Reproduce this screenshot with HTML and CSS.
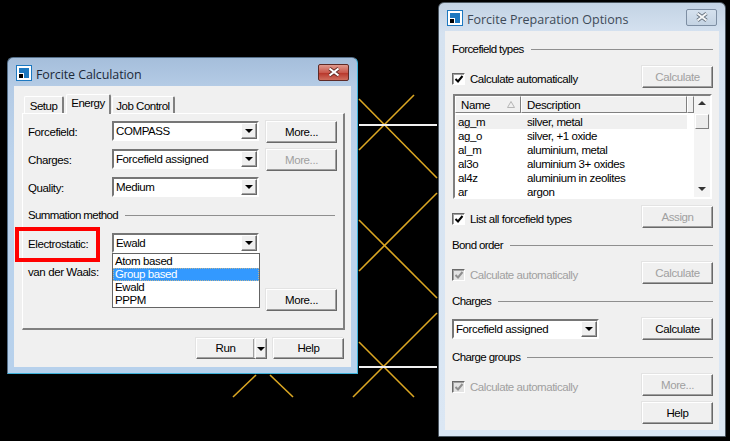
FILE: index.html
```html
<!DOCTYPE html>
<html lang="en">
<head>
  <meta charset="UTF-8" />
  <title>Forcite</title>
  <link rel="stylesheet" href="styles.css">
</head>
<body>

  <!-- model drawn behind the dialogs -->
  <svg class="canvas" width="730" height="441" viewBox="0 0 730 441">
    <g class="bond-y">
      <line x1="359" y1="99" x2="437" y2="178" />
      <line x1="414" y1="95" x2="359" y2="150" />
      <line x1="359" y1="220" x2="437" y2="298" />
      <line x1="437" y1="193" x2="359" y2="271" />
      <line x1="359" y1="342" x2="414" y2="397" />
      <line x1="437" y1="313" x2="353" y2="397" />
      <line x1="256" y1="375" x2="233" y2="397" />
      <line x1="270" y1="375" x2="293" y2="397" />
    </g>
    <g class="bond-w">
      <line x1="359" y1="125" x2="437" y2="125" />
      <line x1="359" y1="367" x2="437" y2="367" />
    </g>
  </svg>

  <section class="window calc">
    <header class="titlebar">
      <svg class="app-icon" width="16" height="16" viewBox="0 0 16 16">
        <rect x="0.5" y="0.5" width="15" height="15" fill="#fff" stroke="#1c78c0" />
        <path d="M3 3h10v10H8V8H3z" fill="#1c78c0" />
        <rect x="3" y="9" width="4" height="4" fill="#000" />
      </svg>
      <h1>Forcite Calculation</h1>
      <button class="close">
        <svg width="14" height="10" viewBox="0 0 14 10">
          <path d="M2.5 1.5 11.5 8.5M11.5 1.5 2.5 8.5" stroke="#5b2620" stroke-width="3.6" />
          <path d="M2.5 1.5 11.5 8.5M11.5 1.5 2.5 8.5" stroke="#fff" stroke-width="2.2" />
        </svg>
      </button>
    </header>

    <div class="client">
      <div class="tabs">
        <div class="tab tab-setup">Setup</div>
        <div class="tab tab-energy">Energy</div>
        <div class="tab tab-job">Job Control</div>
      </div>

      <div class="pane">
        <div class="row">
          <label class="field-label">Forcefield:</label>
          <div class="combo"><span>COMPASS</span><i class="combo-arrow"></i></div>
          <button class="btn more">More...</button>
        </div>
        <div class="row">
          <label class="field-label">Charges:</label>
          <div class="combo"><span>Forcefield assigned</span><i class="combo-arrow"></i></div>
          <button class="btn more" disabled>More...</button>
        </div>
        <div class="row">
          <label class="field-label">Quality:</label>
          <div class="combo"><span>Medium</span><i class="combo-arrow"></i></div>
        </div>

        <div class="group-head summation"><span>Summation method</span></div>

        <div class="row electro">
          <label class="field-label">Electrostatic:</label>
          <div class="combo"><span>Ewald</span><i class="combo-arrow"></i></div>
        </div>
        <div class="row">
          <label class="field-label">van der Waals:</label>
        </div>
        <div class="row right-only">
          <button class="btn more">More...</button>
        </div>

        <ul class="dropdown">
          <li>Atom based</li>
          <li class="selected">Group based</li>
          <li>Ewald</li>
          <li>PPPM</li>
        </ul>
        <div class="callout"></div>
      </div>

      <div class="actions">
        <button class="btn run">Run</button>
        <button class="btn run-arrow"><i class="combo-arrow-glyph"></i></button>
        <button class="btn help">Help</button>
      </div>
    </div>
  </section>

  <section class="window prep">
    <header class="titlebar">
      <svg class="app-icon" width="16" height="16" viewBox="0 0 16 16">
        <rect x="0.5" y="0.5" width="15" height="15" fill="#fff" stroke="#1c78c0" />
        <path d="M3 3h10v10H8V8H3z" fill="#1c78c0" />
        <rect x="3" y="9" width="4" height="4" fill="#000" />
      </svg>
      <h1>Forcite Preparation Options</h1>
      <button class="close">
        <svg width="14" height="10" viewBox="0 0 14 10">
          <path d="M2.5 1.5 11.5 8.5M11.5 1.5 2.5 8.5" stroke="#5f6b78" stroke-width="3.6" />
          <path d="M2.5 1.5 11.5 8.5M11.5 1.5 2.5 8.5" stroke="#f4f6f8" stroke-width="2.2" />
        </svg>
      </button>
    </header>

    <div class="client">
      <div class="group-head first"><span>Forcefield types</span></div>
      <div class="opt-row">
        <label class="check"><i class="box"><svg width="10" height="10" viewBox="0 0 10 10"><path d="M1.5 5 4 7.5 8.5 2" /></svg></i>Calculate automatically</label>
        <button class="btn side" disabled>Calculate</button>
      </div>

      <div class="listview">
        <div class="list-main">
          <div class="list-head">
            <div class="col-name">Name
              <svg width="8" height="7" viewBox="0 0 8 7"><path d="M4 .5 7.5 6.5H.5z" /></svg>
            </div>
            <div class="col-desc">Description</div>
            <div class="col-rest"></div>
          </div>
          <div class="list-row first-row"><span>ag_m</span><span>silver, metal</span></div>
          <div class="list-row"><span>ag_o</span><span>silver, +1 oxide</span></div>
          <div class="list-row"><span>al_m</span><span>aluminium, metal</span></div>
          <div class="list-row"><span>al3o</span><span>aluminium 3+ oxides</span></div>
          <div class="list-row"><span>al4z</span><span>aluminium in zeolites</span></div>
          <div class="list-row"><span>ar</span><span>argon</span></div>
        </div>
        <div class="scrollbar">
          <i class="sb-up"></i>
          <i class="sb-thumb"></i>
          <i class="sb-down"></i>
        </div>
      </div>

      <div class="opt-row assign">
        <label class="check"><i class="box"><svg width="10" height="10" viewBox="0 0 10 10"><path d="M1.5 5 4 7.5 8.5 2" /></svg></i>List all forcefield types</label>
        <button class="btn side" disabled>Assign</button>
      </div>

      <div class="group-head"><span>Bond order</span></div>
      <div class="opt-row">
        <label class="check off"><i class="box"><svg width="10" height="10" viewBox="0 0 10 10"><path d="M1.5 5 4 7.5 8.5 2" /></svg></i>Calculate automatically</label>
        <button class="btn side" disabled>Calculate</button>
      </div>

      <div class="group-head"><span>Charges</span></div>
      <div class="opt-row">
        <div class="combo"><span>Forcefield assigned</span><i class="combo-arrow"></i></div>
        <button class="btn side">Calculate</button>
      </div>

      <div class="group-head"><span>Charge groups</span></div>
      <div class="opt-row">
        <label class="check off"><i class="box"><svg width="10" height="10" viewBox="0 0 10 10"><path d="M1.5 5 4 7.5 8.5 2" /></svg></i>Calculate automatically</label>
        <button class="btn side" disabled>More...</button>
      </div>
      <div class="opt-row last">
        <button class="btn side">Help</button>
      </div>
    </div>
  </section>

</body>
</html>
```

FILE: styles.css
```css
* {
  box-sizing: border-box;
}
html, body {
  margin: 0;
  width: 730px;
  height: 441px;
  overflow: hidden;
}
body {
  position: relative;
  background: #000;
  font-family: "Liberation Sans", Arial, sans-serif;
  font-size: 11.5px;
  letter-spacing: -0.4px;
  color: #000;
}
i {
  display: block;
}

/* backdrop */
.canvas {
  position: absolute;
  left: 0;
  top: 0;
}
.bond-y line {
  stroke: #dba723;
  stroke-width: 1.6;
}
.bond-w line {
  stroke: #f0f0f0;
  stroke-width: 2;
}

/* windows */
.window {
  position: absolute;
  display: flex;
  flex-direction: column;
  border: 1px solid #4c5761;
  border-radius: 6px 6px 0 0;
}
.calc {
  left: 7px;
  top: 57px;
  width: 351px;
  height: 317px;
  background: linear-gradient(#a5bedb 0, #b4cbe5 28px, #bcd3ec 100px, #b7d1ec 100%);
  border-color: #56708a #3db2da #3db2da #56708a;
}
.prep {
  left: 438px;
  top: 2px;
  width: 288px;
  height: 435px;
  background: linear-gradient(#c3d3e4 0, #d5e2f0 30px, #dbe7f4 100%);
}
.titlebar {
  display: flex;
  align-items: center;
  height: 28px;
  padding: 2px 8px 0;
}
.app-icon {
  flex: none;
}
.titlebar h1 {
  flex: 1;
  margin: 0 0 0 4px;
  padding-top: 2px;
  font-family: "Open Sans", sans-serif;
  font-size: 12.5px;
  font-weight: 400;
  letter-spacing: -0.1px;
  color: #1c2a3a;
}
.prep .titlebar h1 {
  letter-spacing: 0;
  color: #3e4a58;
}
.close {
  display: flex;
  align-items: center;
  justify-content: center;
  width: 31px;
  height: 17px;
  margin-top: -2px;
  padding: 0;
  border: 1px solid #5e2a26;
  border-radius: 2px;
  background: linear-gradient(#e09a8e, #c9584c 50%, #b8382c 55%, #cf6e5e);
}
.prep .close {
  border-color: #7d8ea3;
  background: linear-gradient(#d5e1ee, #c4d3e3);
}
.client {
  flex: 1;
  margin: 0 6px 6px;
  background: #f0f0f0;
}

/* left dialog */
.calc .client {
  padding: 0 6px 0 8px;
}
.tabs {
  display: flex;
  align-items: flex-end;
  height: 27px;
  padding-left: 2px;
}
.tab {
  position: relative;
  height: 17px;
  padding-top: 2px;
  line-height: 15px;
  text-align: center;
  letter-spacing: -0.5px;
  background: #f0f0f0;
  border-top: 1px solid #fff;
  border-left: 1px solid #fff;
  border-right: 2px solid #808080;
  border-radius: 2px 2px 0 0;
}
.tab-setup {
  width: 40px;
}
.tab-energy {
  width: 45px;
  height: 20px;
  margin: 0 0 -1px 2px;
  padding-top: 1px;
  z-index: 1;
}
.tab-job {
  width: 63px;
  margin-left: 1px;
}
.pane {
  position: relative;
  height: 217px;
  padding: 7px 0 0 5px;
  border: 1px solid;
  border-width: 1px 2px 2px 1px;
  border-color: #fff #808080 #808080 #fff;
}
.row {
  display: flex;
  height: 22px;
  margin-top: 6px;
}
.row:first-child {
  margin-top: 0;
}
.row.electro {
  margin-top: 11px;
}
.right-only {
  padding-left: 231px;
}
.field-label {
  width: 84px;
  padding-top: 4px;
  line-height: 15px;
}

/* section captions with a rule after them */
.group-head {
  display: flex;
  align-items: center;
  height: 14px;
  margin-top: 10px;
  line-height: 14px;
  letter-spacing: -0.6px;
}
.group-head::after {
  content: "";
  flex: 1;
  margin-left: 7px;
  border-top: 1px solid #8f8f8f;
}
.group-head.first {
  margin-top: 11px;
}
.group-head.summation {
  margin-top: 9px;
  margin-right: 8px;
}

/* standard controls */
.btn {
  height: 22px;
  width: 71px;
  padding: 0 0 1px;
  font: inherit;
  letter-spacing: inherit;
  color: #000;
  background: #f0f0f0;
  border: 1px solid;
  border-color: #fff #696969 #696969 #fff;
  box-shadow: inset -1px -1px 0 #a0a0a0, -1px -1px 0 #e3e3e3;
}
.btn:disabled {
  color: #a0a0a0;
}
.more {
  margin-left: 7px;
}
.actions {
  display: flex;
  margin-top: 8px;
  padding-left: 174px;
}
.actions .btn {
  height: 21px;
}
.actions .run {
  width: 59px;
}
.actions .run-arrow {
  display: flex;
  align-items: center;
  justify-content: center;
  width: 12px;
  padding: 0;
}
.actions .help {
  margin-left: 6px;
}
.combo {
  display: flex;
  align-items: center;
  justify-content: space-between;
  width: 147px;
  height: 20px;
  padding-left: 2px;
  background: #fff;
  border: 2px solid;
  border-color: #767676 #fff #fff #767676;
  line-height: 15px;
}
.combo-arrow {
  position: relative;
  width: 16px;
  height: 16px;
  background: #f0f0f0;
  border: 1px solid;
  border-color: #fff #696969 #696969 #fff;
  box-shadow: inset -1px -1px 0 #a0a0a0;
}
.combo-arrow::after {
  content: "";
  position: absolute;
  left: 3px;
  top: 5px;
  border: 4px solid transparent;
  border-top-color: #000;
  border-bottom: 0;
}
.combo-arrow-glyph {
  width: 0;
  height: 0;
  border: 4px solid transparent;
  border-top-color: #000;
  border-bottom: 0;
}

/* overlays on the left dialog */
.dropdown {
  position: absolute;
  left: 89px;
  top: 139px;
  width: 148px;
  height: 55px;
  margin: 0;
  padding: 1px 0 0;
  list-style: none;
  background: #fff;
  border: 1px solid #646464;
}
.dropdown li {
  height: 13px;
  padding-left: 2px;
  line-height: 13px;
}
.dropdown .selected {
  color: #fff;
  background: #3399ff;
  outline: 1px dotted rgba(240, 190, 110, 0.7);
  outline-offset: -1px;
}
.callout {
  position: absolute;
  left: -8px;
  top: 113px;
  width: 85px;
  height: 35px;
  border: 4px solid #f00;
}

/* right dialog */
.prep .client {
  padding: 0 6px 0 7px;
}
.opt-row {
  display: flex;
  align-items: center;
  justify-content: space-between;
  height: 22px;
  margin-top: 10px;
}
.opt-row.assign {
  margin-top: 7px;
}
.opt-row.last {
  justify-content: flex-end;
  margin-top: 6px;
}
.check {
  display: flex;
  align-items: center;
  gap: 5px;
  margin-top: 4px;
  line-height: 15px;
  letter-spacing: -0.46px;
}
.box {
  display: flex;
  align-items: center;
  justify-content: center;
  width: 13px;
  height: 12px;
  background: #fff;
  border: 1px solid;
  border-color: #696969 #fff #fff #696969;
  box-shadow: inset 1px 1px 0 #a0a0a0;
}
.box svg {
  fill: none;
  stroke: #000;
  stroke-width: 2;
}
.check.off {
  color: #a0a0a0;
}
.check.off .box {
  background: #e3e3e3;
}
.check.off .box svg {
  stroke: #8f8f8f;
}
.listview {
  display: flex;
  width: 259px;
  height: 105px;
  margin: 6px 0 0 1px;
  background: #fff;
  border: 2px solid;
  border-color: #808080 #fff #fff #808080;
}
.list-main {
  flex: 1;
  min-width: 0;
}
.list-head {
  display: flex;
  height: 17px;
  margin-bottom: 2px;
  padding-top: 1px;
  line-height: 14px;
}
.list-head > div {
  position: relative;
  margin-top: -1px;
  padding-top: 1px;
  background: #f0f0f0;
  border: 1px solid;
  border-color: #fff #808080 #808080 #fff;
}
.col-name {
  width: 66px;
  padding-left: 5px;
}
.col-name svg {
  position: absolute;
  left: 51px;
  top: 4px;
  fill: none;
  stroke: #b5b5b5;
}
.col-desc {
  width: 166px;
  padding-left: 5px;
}
.col-rest {
  flex: 1;
}
.list-row {
  display: flex;
  height: 14px;
  width: 231px;
  margin-left: 1px;
  padding-left: 2px;
  line-height: 15px;
}
.list-row span:first-child {
  width: 69px;
}
.first-row {
  background: #f0f0f0;
}
.scrollbar {
  position: relative;
  width: 16px;
  background: #f4f4f4;
}
.sb-thumb {
  position: absolute;
  left: 1px;
  top: 18px;
  width: 14px;
  height: 15px;
  background: #ececec;
  border: 1px solid;
  border-color: #fff #808080 #808080 #fff;
}
.sb-up,
.sb-down {
  position: absolute;
  left: 4px;
  width: 0;
  height: 0;
  border: 4px solid transparent;
}
.sb-up {
  top: 5px;
  border-bottom-color: #333;
  border-top: 0;
}
.sb-down {
  bottom: 6px;
  border-top-color: #333;
  border-bottom: 0;
}
```
